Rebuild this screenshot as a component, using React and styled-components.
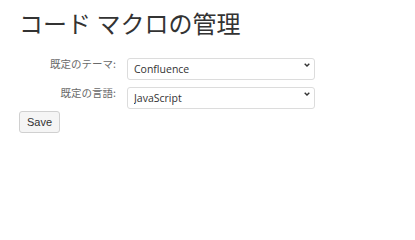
import React, { useState } from 'react';
import styled, { createGlobalStyle } from 'styled-components';

const GlobalStyle = createGlobalStyle`
  html, body {
    margin: 0;
    padding: 0;
    background: #fff;
  }
`;

// Styled Components
const Page = styled.div`
  padding: 9px 19px 0;
  font-family: "Noto Sans CJK JP", "Noto Sans", sans-serif;
`;

const Title = styled.h1`
  margin: 0;
  font-size: 24px;
  line-height: 28px;
  font-weight: 400;
  color: #333;
`;

const Form = styled.form`
  display: flex;
  flex-direction: column;
  margin-top: 17px;
`;

const Row = styled.div`
  display: grid;
  grid-template-columns: 97px 188px;
  column-gap: 11px;
  align-items: center;
  margin-bottom: ${(p) => p.$space}px;
`;

const Label = styled.label`
  text-align: right;
  font-size: 10.5px;
  line-height: 14px;
  color: #6a6a6a;
  padding-bottom: 3px;
`;

const SelectWrap = styled.div`
  position: relative;
  height: 22px;
`;

const Select = styled.select`
  appearance: none;
  width: 100%;
  height: 22px;
  box-sizing: border-box;
  margin: 0;
  padding: 0 20px 0 6px;
  border: 1px solid #dcdcdc;
  border-radius: 3px;
  background: #fff;
  font-family: "Open Sans", "Noto Sans", sans-serif;
  font-size: 10.5px;
  color: #333;
  outline: none;
`;

const Chevron = styled.svg`
  position: absolute;
  right: 5px;
  top: 9px;
  width: 6px;
  height: 4px;
  pointer-events: none;
`;

const Button = styled.button`
  align-self: flex-start;
  width: 41px;
  height: 22px;
  box-sizing: border-box;
  margin: 0;
  padding: 0;
  border: 1px solid #d0d0d0;
  border-radius: 3px;
  background: #f5f5f5;
  font-family: "Liberation Sans", Arial, sans-serif;
  font-size: 11px;
  color: #333;
  cursor: pointer;
  &:hover {
    background: #ebebeb;
  }
`;

const themes = ['Confluence', 'Default', 'Django', 'Eclipse', 'Emacs', 'FadeToGrey', 'Midnight', 'RDark'];
const languages = ['JavaScript', 'Java', 'Python', 'SQL', 'XML', 'Bash', 'C#', 'C++'];

const Dropdown = ({ id, value, options, onChange }) => (
  <SelectWrap>
    <Select id={id} value={value} onChange={(e) => onChange(e.target.value)}>
      {options.map((opt) => (
        <option key={opt} value={opt}>
          {opt}
        </option>
      ))}
    </Select>
    <Chevron viewBox="0 0 6 4">
      <path d="M0.7 0.7 L3 3 L5.3 0.7" fill="none" stroke="#333" strokeWidth="1.4" />
    </Chevron>
  </SelectWrap>
);

const App = () => {
  const [theme, setTheme] = useState('Confluence');
  const [language, setLanguage] = useState('JavaScript');

  return (
    <Page>
      <GlobalStyle />
      <Title>コード マクロの管理</Title>

      <Form onSubmit={(e) => e.preventDefault()}>
        <Row $space={7}>
          <Label htmlFor="theme">既定のテーマ:</Label>
          <Dropdown id="theme" value={theme} options={themes} onChange={setTheme} />
        </Row>
        <Row $space={6}>
          <Label htmlFor="language">既定の言語:</Label>
          <Dropdown id="language" value={language} options={languages} onChange={setLanguage} />
        </Row>
        <Button type="submit">Save</Button>
      </Form>
    </Page>
  );
};

export default App;
